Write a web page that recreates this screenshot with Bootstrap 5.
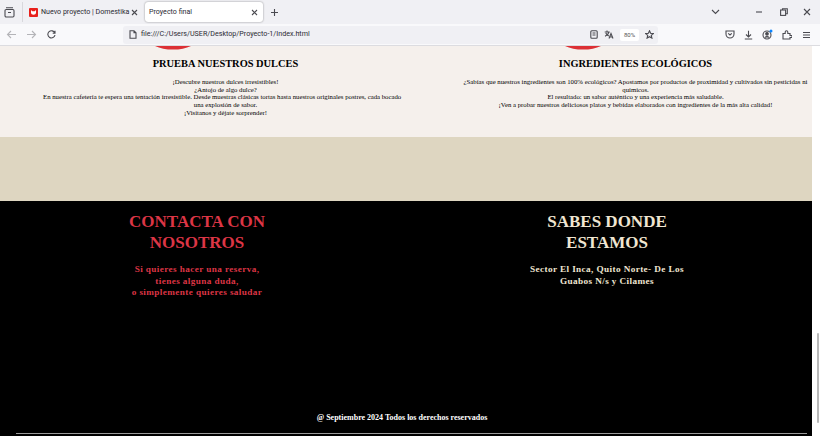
<!doctype html>
<html lang="es"><head><meta charset="utf-8"><title>Proyecto final</title>
<link href="https://cdn.jsdelivr.net/npm/bootstrap@5.3.0/dist/css/bootstrap.min.css" rel="stylesheet">
<style>
html,body{height:436px;overflow:hidden;background:#fff}
body{font-family:"Liberation Serif",serif;color:#000}
.ui{font-family:Roboto,sans-serif;color:#2b2a33}
.tabbar{height:24px;background:#f0f0f4;padding-left:4px}
.ic{display:block;flex:none;fill:none;stroke:#4a4a50;stroke-width:1.1}
.dim{stroke:#b4b4b8}
.sep{width:1px;height:20px;background:#d8d8dc;margin:0 6px 0 7px;flex:none}
.tabx{height:20px;font-size:7.1px;flex:none}
.tab1{width:113.5px;padding-right:5px}
.tab2{width:118px;padding:0 5px 0 4px;background:#fff;border-radius:3px;box-shadow:0 0 2px rgba(0,0,0,.45);margin-left:2.5px}
.fav{display:block;margin-right:3px;flex:none}
.plus{margin-left:6.5px}
.winmin{margin-left:35px}.winres{margin-left:17px}.winx{margin-left:15px;margin-right:9px}
.tbar{height:22px;background:#f9f9fb;border-bottom:1px solid #dcdce0;padding-left:6px}
.fwd{margin-left:9px}.rel{margin-left:10px}
.urlb{width:535px;height:18px;background:#f0f0f4;border-radius:3px;padding:0 4px 0 6px;font-size:7.15px;margin-left:67px}
.docic{margin-right:4px}
.zoomb{width:19px;height:12px;background:#fff;border-radius:2px;font-size:6px;color:#555;margin-left:6px;flex:none}
.i6{margin-left:6px}
.rightic{margin-left:67px}
.ra{margin-left:9px}.rb{margin-left:9px}.rc{margin-left:9px}.rd{margin-left:10px}
.stage{height:390px}
.pagew{width:812px;flex:none}
.rail{width:8px;flex:none;background:#fff;padding:287px 1px 0 5px}
.thumb{height:90px;background:#b9b9b9;border-radius:1px}
.cream{height:91px;background:#f5f0ec;padding-left:20.5px;overflow:hidden}
.tcol{width:410px;flex:none}
.dish{display:block;margin-left:134.5px}
.tcap{font-size:10.4px;font-weight:700;line-height:12px;margin:8px 0 8px;text-align:center}
.tbody{font-size:6.75px;line-height:7.67px;text-align:center;margin:0 auto;width:372px}
.tnarrow{width:355px}
.sand{height:64px;background:#ded6c1}
.ink{height:235px;background:#000;padding-top:11px}
.bcol{width:394px;flex:none;text-align:center}
.bcol2{margin-left:12px;width:402px}
.bhead{font-size:17px;line-height:20.5px;font-weight:700;margin:0 0 11px}
.bsub{font-size:9.2px;line-height:11.6px;font-weight:700;letter-spacing:.4px;margin:0}
.redt{color:#dc3545}.tant{color:#f0e6d2}
.foot{color:#fff;font-size:8px;font-weight:700;line-height:10px;text-align:center;margin:114px 0 0 -8px}
.rule{height:1px;background:#9a9a9a;margin:10px 5px 0 16px}
</style></head><body>
<div class="ui">
 <div class="tabbar d-flex align-items-center">
  <svg class="ic" width="11" height="11" viewBox="0 0 11 11"><rect x="1" y="2.5" width="9" height="7.5" rx="1.2"/><path d="M2 .8h7M4 5.5h3"/></svg>
  <div class="sep"></div>
  <div class="tabx tab1 d-flex align-items-center"><svg class="fav" width="9" height="9" viewBox="0 0 9 9"><rect width="9" height="9" rx="1" fill="#e8201c"/><path d="M2 2l1.300 1.200h2.400L7 2v2.600C7 6 5.800 6.800 4.500 6.800S2 6 2 4.600z" fill="#fff"/></svg><span class="flex-grow-1 text-nowrap">Nuevo proyecto | Domestika</span>
   <svg class="ic" width="7" height="7" viewBox="0 0 7 7"><path d="M1 1l5 5M6 1l-5 5"/></svg></div>
  <div class="tabx tab2 d-flex align-items-center"><span class="flex-grow-1">Proyecto final</span>
   <svg class="ic" width="7" height="7" viewBox="0 0 7 7"><path d="M1 1l5 5M6 1l-5 5"/></svg></div>
  <svg class="ic plus" width="9" height="9" viewBox="0 0 9 9"><path d="M4.5 1v7M1 4.5h7"/></svg>
  <svg class="ic ms-auto" width="9" height="6" viewBox="0 0 9 6"><path d="M1 1l3.5 3.5L8 1"/></svg>
  <svg class="ic winmin" width="8" height="8" viewBox="0 0 8 8"><path d="M1 4h6"/></svg>
  <svg class="ic winres" width="8" height="8" viewBox="0 0 8 8"><rect x=".6" y="2" width="5" height="5.4"/><path d="M2.5 2V.7h4.8v5H6"/></svg>
  <svg class="ic winx" width="8" height="8" viewBox="0 0 8 8"><path d="M1 1l6 6M7 1L1 7"/></svg>
 </div>
 <div class="tbar d-flex align-items-center">
  <svg class="ic dim" width="11" height="9" viewBox="0 0 11 9"><path d="M10 4.5H1.500M5 1L1.500 4.500 5 8"/></svg>
  <svg class="ic dim fwd" width="11" height="9" viewBox="0 0 11 9"><path d="M1 4.500h8.500M6 1l3.500 3.500L6 8"/></svg>
  <svg class="ic rel" width="9" height="9" viewBox="0 0 9 9"><path d="M7.800 3A3.600 3.600 0 1 0 8 5M8 .8V3.200H5.700"/></svg>
  <div class="urlb d-flex align-items-center">
   <svg class="ic docic" width="8" height="9" viewBox="0 0 8 9"><path d="M1 .8h4l2 2v5.400H1zM5 .8v2h2"/></svg>
   <span class="flex-grow-1 text-nowrap">file:///C:/Users/USER/Desktop/Proyecto-1/Index.html</span>
   <svg class="ic" width="8" height="9" viewBox="0 0 8 9"><rect x=".8" y=".8" width="6.400" height="7.400" rx="1"/><path d="M2.500 3h3M2.500 5h3"/></svg>
   <svg class="ic i6" width="10" height="9" viewBox="0 0 10 9"><path d="M.7 2h5M3 .6V2M5 2C4.500 4 3 5.500 1 6.200M1.800 3c.6 1.400 1.700 2.400 3 3M5 8.500L7 3.500l2 5M5.700 7h2.600"/></svg>
   <span class="zoomb d-flex align-items-center justify-content-center">80%</span>
   <svg class="ic i6" width="9" height="9" viewBox="0 0 9 9"><path d="M4.500.8l1.100 2.500 2.700.3-2 1.800.6 2.700-2.400-1.400L2.100 8.100l.6-2.700-2-1.800 2.700-.3z"/></svg>
  </div>
  <div class="d-flex align-items-center rightic">
   <svg class="ic" width="10" height="9" viewBox="0 0 10 9"><path d="M1 1h8v3a4 4 0 0 1-8 0zM3.200 3.400L5 5l1.800-1.600"/></svg>
   <svg class="ic ra" width="9" height="10" viewBox="0 0 9 10"><path d="M4.500 .8v6M2 4.500l2.500 2.500L7 4.500M.8 9h7.400"/></svg>
   <svg class="ic rb" width="11" height="11" viewBox="0 0 11 11"><circle cx="5" cy="6" r="4"/><circle cx="5" cy="4.800" r="1.300" fill="#4a4a50"/><path d="M2.800 8.600c.5-1.500 3.900-1.500 4.400 0" fill="#4a4a50"/><circle cx="9" cy="2" r="1.500" fill="#0a84ff" stroke="none"/></svg>
   <svg class="ic rc" width="10" height="10" viewBox="0 0 10 10"><path d="M1 9V3.500h2.200V2a1.300 1.300 0 0 1 2.600 0v1.500H8v2H9.200a1 1 0 0 1 0 2H8V9z"/></svg>
   <svg class="ic rd" width="9" height="8" viewBox="0 0 9 8"><path d="M1 1.500h7M1 4h7M1 6.500h7"/></svg>
  </div>
 </div>
</div>
<div class="stage d-flex">
 <div class="pagew">
  <section class="cream d-flex">
   <div class="tcol">
    <svg class="dish" width="36" height="4" viewBox="0 0 36 4"><path d="M0 0h36C31 2.500 25 3.600 18 3.600S5 2.500 0 0z" fill="#dc3035"/></svg>
    <h3 class="tcap">PRUEBA NUESTROS DULCES</h3>
    <p class="tbody mb-0">¡Descubre nuestros dulces irresistibles!<br>¿Antojo de algo dulce?<br>En nuestra cafetería te espera una tentación irresistible. Desde muestras clásicas tortas hasta nuestros originales postres, cada bocado&nbsp;&nbsp;&nbsp;&nbsp; una explosión de sabor.<br>¡Visítanos y déjate sorprender!</p>
   </div>
   <div class="tcol">
    <svg class="dish" width="36" height="4" viewBox="0 0 36 4"><path d="M0 0h36C31 2.500 25 3.600 18 3.600S5 2.500 0 0z" fill="#dc3035"/></svg>
    <h3 class="tcap">INGREDIENTES ECOLÓGICOS</h3>
    <p class="tbody tnarrow mb-0">¿Sabías que nuestros ingredientes son 100% ecológicos? Apostamos por productos de proximidad y cultivados sin pesticidas ni químicos.<br>El resultado: un sabor auténtico y una experiencia más saludable.<br>¡Ven a probar nuestros deliciosos platos y bebidas elaborados con ingredientes de la más alta calidad!</p>
   </div>
  </section>
  <section class="sand"></section>
  <section class="ink">
   <div class="d-flex">
    <div class="bcol redt">
     <h2 class="bhead">CONTACTA CON<br>NOSOTROS</h2>
     <p class="bsub">Si quieres hacer una reserva,<br>tienes alguna duda,<br>o simplemente quieres saludar</p>
    </div>
    <div class="bcol bcol2 tant">
     <h2 class="bhead">SABES DONDE<br>ESTAMOS</h2>
     <p class="bsub">Sector El Inca, Quito Norte- De Los<br>Guabos N/s y Cilames</p>
    </div>
   </div>
   <p class="foot">@ Septiembre 2024 Todos los derechos reservados</p>
   <div class="rule"></div>
  </section>
 </div>
 <div class="rail"><div class="thumb"></div></div>
</div>
<script src="https://cdn.jsdelivr.net/npm/bootstrap@5.3.0/dist/js/bootstrap.bundle.min.js"></script>
</body></html>
